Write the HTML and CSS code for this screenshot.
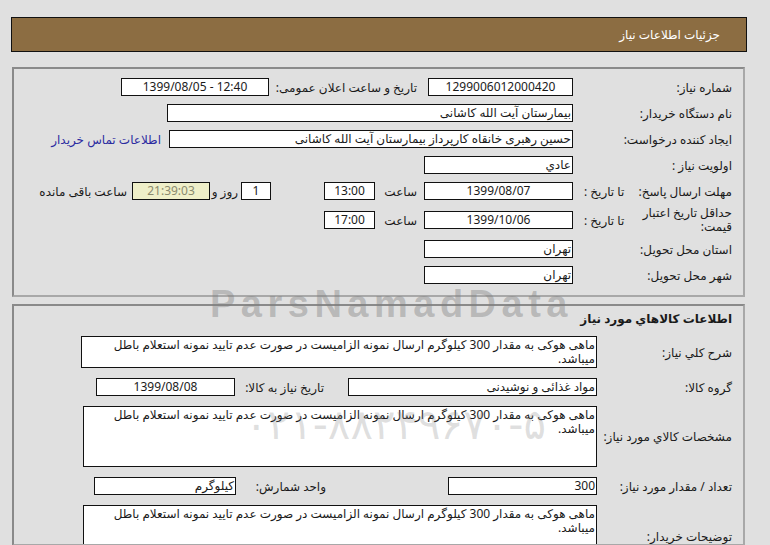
FILE: index.html
```html
<!DOCTYPE html>
<html lang="fa" dir="rtl">
<head>
    <meta charset="UTF-8" />
    <meta name="viewport" content="width=device-width, initial-scale=1.0" />
    <title>جزئیات اطلاعات نیاز</title>
    <link rel="stylesheet" href="styles.css">
</head>
<body>
<div class="page">
    <div class="header">جزئیات اطلاعات نیاز</div>

    <!-- main need info -->
    <div class="panel info">
        <div class="row">
            <div class="lbl">شماره نیاز:</div>
            <div class="box center w145">1299006012000420</div>
            <div class="lbl2 w159">تاریخ و ساعت اعلان عمومی:</div>
            <div class="box center ltr w148">1399/08/05 - 12:40</div>
        </div>
        <div class="row">
            <div class="lbl">نام دستگاه خریدار:</div>
            <div class="box w406">بیمارستان آیت الله کاشانی</div>
        </div>
        <div class="row">
            <div class="lbl">ایجاد کننده درخواست:</div>
            <div class="box w404">حسین رهبری خانقاه کارپرداز بیمارستان آیت الله کاشانی</div>
            <a class="contact" href="#">اطلاعات تماس خریدار</a>
        </div>
        <div class="row">
            <div class="lbl">اولویت نیاز :</div>
            <div class="box w149">عادي</div>
        </div>
        <div class="row">
            <div class="lbl split">
                <span>مهلت ارسال پاسخ:</span>
                <span class="until">تا تاریخ :</span>
            </div>
            <div class="box center w149">1399/08/07</div>
            <div class="lbl2 w49">ساعت</div>
            <div class="box center w51">13:00</div>
            <div class="box center w30 ml-gap">1</div>
            <div class="day">روز و</div>
            <div class="box center timer">21:39:03</div>
            <div class="remain">ساعت باقی مانده</div>
        </div>
        <div class="row tall">
            <div class="lbl split">
                <span class="wrap">حداقل تاریخ اعتبار قیمت:</span>
                <span class="until">تا تاریخ :</span>
            </div>
            <div class="box center w149">1399/10/06</div>
            <div class="lbl2 w49">ساعت</div>
            <div class="box center w51">17:00</div>
        </div>
        <div class="row">
            <div class="lbl">استان محل تحویل:</div>
            <div class="box w149">تهران</div>
        </div>
        <div class="row">
            <div class="lbl">شهر محل تحویل:</div>
            <div class="box w149">تهران</div>
        </div>
    </div>

    <!-- goods info -->
    <div class="panel goods">
        <div class="title">اطلاعات کالاهاي مورد نیاز</div>
        <div class="grow">
            <div class="glbl">شرح کلي نیاز:</div>
            <div class="box text w516 h32">ماهی هوکی به مقدار 300 کیلوگرم ارسال نمونه الزامیست در صورت عدم تایید نمونه استعلام باطل میباشد.</div>
        </div>
        <div class="grow">
            <div class="glbl">گروه کالا:</div>
            <div class="box w249">مواد غذائی و نوشیدنی</div>
            <div class="lbl-need">تاریخ نیاز به کالا:</div>
            <div class="box center w139">1399/08/08</div>
        </div>
        <div class="grow">
            <div class="glbl">مشخصات کالاي مورد نیاز:</div>
            <div class="box text w514 h61">ماهی هوکی به مقدار 300 کیلوگرم ارسال نمونه الزامیست در صورت عدم تایید نمونه استعلام باطل میباشد.</div>
        </div>
        <div class="grow">
            <div class="glbl">تعداد / مقدار مورد نیاز:</div>
            <div class="box w149">300</div>
            <div class="lbl-unit">واحد شمارش:</div>
            <div class="box w142">کیلوگرم</div>
        </div>
        <div class="grow">
            <div class="glbl">توضیحات خریدار:</div>
            <div class="box text w514 h62">ماهی هوکی به مقدار 300 کیلوگرم ارسال نمونه الزامیست در صورت عدم تایید نمونه استعلام باطل میباشد.</div>
        </div>
    </div>

    <!-- faint site watermark over the form -->
    <div class="mark-name">ParsNamadData</div>
    <div class="mark-phone">۰۲۱-۸۸۲۴۹۶۷۰-۵</div>
</div>
</body>
</html>
```

FILE: styles.css
```css
body {
    margin: 0;
    background-color: #E0E0E0;
    font-family: 'Noto Sans', 'DejaVu Sans', sans-serif;
    font-size: 12px;
    color: #1A1A1A;
}
.page {
    position: relative;
    width: 736px;
    margin: 17px 23px 0 11px;
    direction: rtl;
}
.header {
    height: 35px;
    box-sizing: border-box;
    background-color: #8C6D42;
    border: 1px solid #111;
    color: #FFFFFF;
    font-size: 12px;
    line-height: 33px;
    padding-right: 26px;
}

/* Panels */
.panel {
    margin: 15px 2px 0 1px;
    border: 2px solid #8A8A8A;
    border-right-color: #A8A8A8;
    border-bottom-color: #A8A8A8;
    padding-right: 11px;
}
.info {
    padding-top: 5px;
    padding-bottom: 7px;
}
.goods {
    margin-top: 7px;
    padding-top: 3px;
    height: 235px;
    overflow: hidden;
}

.row {
    display: flex;
    align-items: center;
    height: 26px;
}
.row.tall {
    height: 32px;
}
.lbl {
    width: 159px;
    flex: none;
}
.lbl.split {
    display: flex;
    align-items: center;
    justify-content: space-between;
    padding-left: 11px;
    box-sizing: border-box;
}
.lbl .wrap {
    width: 96px;
    line-height: 14px;
}
.lbl2 {
    flex: none;
    box-sizing: border-box;
    padding-right: 11px;
}
.w159 { width: 159px; }
.w49 { width: 49px; padding-right: 7px; }

/* Input-like boxes */
.box {
    flex: none;
    box-sizing: border-box;
    height: 18px;
    line-height: 16px;
    border: 1px solid #111;
    background-color: #FFFFFF;
    padding: 0 1px;
    white-space: nowrap;
    overflow: hidden;
}
.box.center { text-align: center; }
.box.ltr { direction: ltr; }
.box.text {
    white-space: normal;
    line-height: 14px;
    padding-top: 1px;
}
.w30 { width: 30px; }
.w51 { width: 51px; }
.w139 { width: 139px; }
.w142 { width: 142px; }
.w145 { width: 145px; }
.w148 { width: 148px; }
.w149 { width: 149px; }
.w249 { width: 249px; }
.w404 { width: 404px; }
.w406 { width: 406px; }
.w514 { width: 514px; }
.w516 { width: 516px; }
.h32 { height: 32px; }
.h61 { height: 61px; }
.h62 { height: 62px; }

.ml-gap { margin-right: 53px; }
.day {
    width: 31px;
    padding-right: 3px;
    box-sizing: border-box;
}
.timer {
    width: 78px;
    background-color: #EFEFC9;
    color: #8A8A6E;
}
.remain {
    margin-right: 5px;
}
.contact {
    margin-right: 8px;
    color: #2B2BA0;
    text-decoration: none;
}

/* Goods panel */
.title {
    font-weight: bold;
    font-size: 12px;
    line-height: 20px;
}
.grow {
    display: flex;
    align-items: center;
    margin-top: 10px;
}
.title + .grow {
    margin-top: 7px;
}
.glbl {
    width: 135px;
    flex: none;
}
.lbl-need {
    flex: none;
    width: 113px;
    padding-right: 24px;
    box-sizing: border-box;
}
.lbl-unit {
    flex: none;
    width: 212px;
    padding-right: 122px;
    box-sizing: border-box;
}

/* Watermark */
.mark-name, .mark-phone {
    position: absolute;
    direction: ltr;
    pointer-events: none;
    white-space: nowrap;
}
.mark-name {
    top: 274px;
    left: 199px;
    font-family: 'Liberation Sans', sans-serif;
    font-weight: bold;
    font-size: 38px;
    line-height: 26px;
    letter-spacing: 5.5px;
    color: rgba(128, 128, 128, 0.42);
}
.mark-phone {
    top: 383px;
    left: 234px;
    font-family: 'DejaVu Sans', sans-serif;
    font-size: 42px;
    color: rgba(128, 128, 128, 0.25);
}
```
